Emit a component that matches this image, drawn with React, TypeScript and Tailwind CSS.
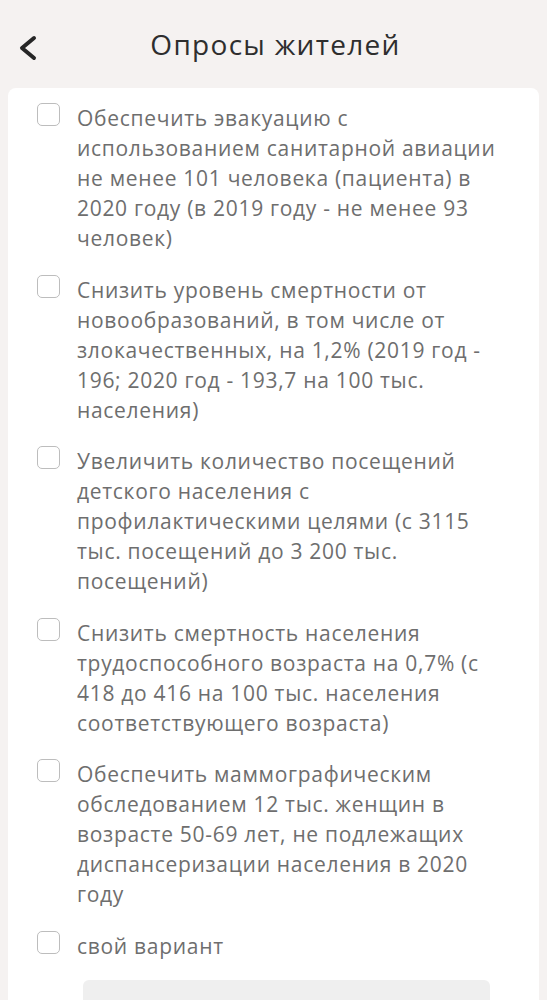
import React from "react";

const items: string[][] = [
  [
    "Обеспечить эвакуацию с",
    "использованием санитарной авиации",
    "не менее 101 человека (пациента) в",
    "2020 году (в 2019 году - не менее 93",
    "человек)",
  ],
  [
    "Снизить уровень смертности от",
    "новообразований, в том числе от",
    "злокачественных, на 1,2% (2019 год -",
    "196; 2020 год - 193,7 на 100 тыс.",
    "населения)",
  ],
  [
    "Увеличить количество посещений",
    "детского населения с",
    "профилактическими целями (с 3115",
    "тыс. посещений до 3 200 тыс.",
    "посещений)",
  ],
  [
    "Снизить смертность населения",
    "трудоспособного возраста на 0,7% (с",
    "418 до 416 на 100 тыс. населения",
    "соответствующего возраста)",
  ],
  [
    "Обеспечить маммографическим",
    "обследованием 12 тыс. женщин в",
    "возрасте 50-69 лет, не подлежащих",
    "диспансеризации населения в 2020",
    "году",
  ],
  ["свой вариант"],
];

export default function App() {
  return (
    <div
      className="w-[547px] h-[1000px] overflow-hidden bg-[#f5f2f1]"
      style={{ fontFamily: '"Open Sans", "Liberation Sans", sans-serif' }}
    >
      <header className="h-[88px] flex items-center relative">
        <svg
          className="absolute left-[16px] top-[34px]"
          width="24"
          height="28"
          viewBox="0 0 24 28"
        >
          <path
            d="M18 4 L6 14 L18 24"
            fill="none"
            stroke="#262626"
            strokeWidth="4"
            strokeLinecap="round"
            strokeLinejoin="round"
          />
        </svg>
        <h1 className="flex-1 text-center text-[28px] tracking-[1.3px] text-[#2e2e2e] pl-[4px] leading-none">
          Опросы жителей
        </h1>
      </header>
      <div className="mx-[8px] bg-white rounded-t-[8px] pt-[15px] h-[1000px]">
        <div className="flex flex-col gap-[21.5px] pl-[29px]">
          {items.map((lines, i) => (
            <div key={i} className="flex items-start">
              <div className="w-[23px] h-[23px] rounded-[5px] border-[1.5px] border-[#bdbdbd] shrink-0" />
              <div className="ml-[17px] text-[21px] tracking-[0.7px] leading-[30px] text-[#6e6e6e]">
                {lines.map((l, j) => (
                  <div key={j} className="whitespace-nowrap">
                    {l}
                  </div>
                ))}
              </div>
            </div>
          ))}
        </div>
        <div className="ml-[75px] mr-[49px] mt-[19px] h-[60px] rounded-[6px] bg-[#efefef]" />
      </div>
    </div>
  );
}
